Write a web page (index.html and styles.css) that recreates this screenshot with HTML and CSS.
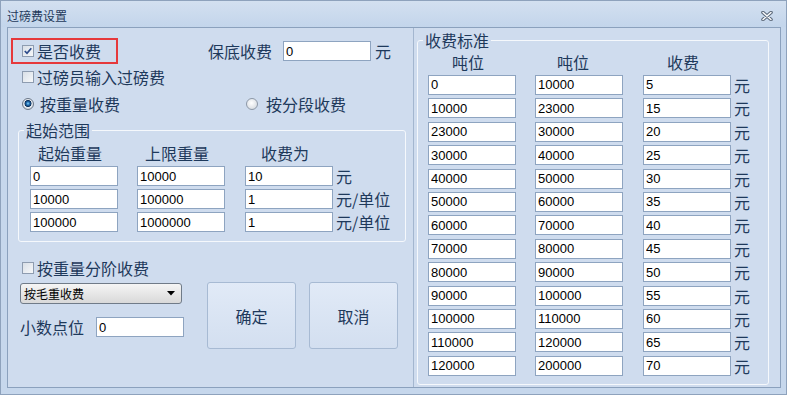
FILE: index.html
```html
<!DOCTYPE html>
<html lang="zh-CN">
<head>
  <meta charset="UTF-8">
  <title>过磅费设置</title>
  <link rel="stylesheet" href="styles.css">
</head>
<body>
  <div class="window">
    <div class="titlebar">
      <span class="title">过磅费设置</span>
      <svg class="close" width="12" height="10" viewBox="0 0 12 10">
        <path d="M2 1.5 L10 8.5 M10 1.5 L2 8.5" stroke="#5d6b7d" stroke-width="3.6" stroke-linecap="round"/>
        <path d="M2 1.5 L10 8.5 M10 1.5 L2 8.5" stroke="#ffffff" stroke-width="1.4" stroke-linecap="round"/>
      </svg>
    </div>
    <div class="body">
      <div class="left">
        <div class="row first-row">
          <div class="highlight">
            <span class="check on"><svg width="10" height="10" viewBox="0 0 10 10"><path d="M1.8 5 L4 7.3 L8.3 2.2" fill="none" stroke="#2b4a8b" stroke-width="1.7"/></svg></span>
            <span>是否收费</span>
          </div>
          <span class="min-label">保底收费</span>
          <input class="field min-field" type="text" value="0">
          <span class="unit">元</span>
        </div>
        <div class="row check-row">
          <span class="check"></span>
          <span>过磅员输入过磅费</span>
        </div>
        <div class="row radio-row">
          <span class="radio on"></span>
          <span class="radio-text">按重量收费</span>
          <span class="radio second"></span>
          <span class="radio-text">按分段收费</span>
        </div>

        <fieldset class="group range">
          <legend>起始范围</legend>
          <div class="grid">
            <span class="head" style="padding-left:8px">起始重量</span>
            <span class="head" style="padding-left:8px">上限重量</span>
            <span class="head" style="padding-left:16px">收费为</span>
            <span></span>
            <input class="field" type="text" value="0">
            <input class="field" type="text" value="10000">
            <input class="field" type="text" value="10">
            <span class="unit">元</span>
            <input class="field" type="text" value="10000">
            <input class="field" type="text" value="100000">
            <input class="field" type="text" value="1">
            <span class="unit">元/单位</span>
            <input class="field" type="text" value="100000">
            <input class="field" type="text" value="1000000">
            <input class="field" type="text" value="1">
            <span class="unit">元/单位</span>
          </div>
        </fieldset>

        <div class="row check-row step-row">
          <span class="check"></span>
          <span>按重量分阶收费</span>
        </div>
        <div class="bottom">
          <div class="options">
            <div class="select">
              <span>按毛重收费</span>
              <svg width="8" height="5" viewBox="0 0 8 5"><path d="M0 0 H8 L4 4.5 Z" fill="#000"/></svg>
            </div>
            <div class="row decimal-row">
              <span>小数点位</span>
              <input class="field" type="text" value="0">
            </div>
          </div>
          <button class="btn">确定</button>
          <button class="btn">取消</button>
        </div>
      </div>

      <div class="right">
        <fieldset class="group standard">
          <legend>收费标准</legend>
          <div class="grid table">
            <span class="head" style="padding-left:24px">吨位</span>
            <span class="head" style="padding-left:22px">吨位</span>
            <span class="head" style="padding-left:24px">收费</span>
            <span></span>
            <input class="field" type="text" value="0"><input class="field" type="text" value="10000"><input class="field" type="text" value="5"><span class="unit">元</span>
            <input class="field" type="text" value="10000"><input class="field" type="text" value="23000"><input class="field" type="text" value="15"><span class="unit">元</span>
            <input class="field" type="text" value="23000"><input class="field" type="text" value="30000"><input class="field" type="text" value="20"><span class="unit">元</span>
            <input class="field" type="text" value="30000"><input class="field" type="text" value="40000"><input class="field" type="text" value="25"><span class="unit">元</span>
            <input class="field" type="text" value="40000"><input class="field" type="text" value="50000"><input class="field" type="text" value="30"><span class="unit">元</span>
            <input class="field" type="text" value="50000"><input class="field" type="text" value="60000"><input class="field" type="text" value="35"><span class="unit">元</span>
            <input class="field" type="text" value="60000"><input class="field" type="text" value="70000"><input class="field" type="text" value="40"><span class="unit">元</span>
            <input class="field" type="text" value="70000"><input class="field" type="text" value="80000"><input class="field" type="text" value="45"><span class="unit">元</span>
            <input class="field" type="text" value="80000"><input class="field" type="text" value="90000"><input class="field" type="text" value="50"><span class="unit">元</span>
            <input class="field" type="text" value="90000"><input class="field" type="text" value="100000"><input class="field" type="text" value="55"><span class="unit">元</span>
            <input class="field" type="text" value="100000"><input class="field" type="text" value="110000"><input class="field" type="text" value="60"><span class="unit">元</span>
            <input class="field" type="text" value="110000"><input class="field" type="text" value="120000"><input class="field" type="text" value="65"><span class="unit">元</span>
            <input class="field" type="text" value="120000"><input class="field" type="text" value="200000"><input class="field" type="text" value="70"><span class="unit">元</span>
          </div>
        </fieldset>
      </div>
    </div>
  </div>
</body>
</html>
```

FILE: styles.css
```css
* {
  box-sizing: border-box;
}
body {
  margin: 0;
  font-family: "Noto Sans CJK SC", sans-serif;
  color: #1e395b;
}
.window {
  width: 787px;
  height: 395px;
  border: 1px solid #8ea2bc;
  background: #c6d7ec;
  display: flex;
  flex-direction: column;
}
.titlebar {
  height: 26px;
  flex: none;
  display: flex;
  align-items: center;
  padding: 4px 13px 0 6px;
  background: linear-gradient(#d3e0f0, #c3d5eb);
  font-size: 12px;
  line-height: 16px;
}
.close {
  margin-left: auto;
}
.body {
  flex: 1;
  margin: 0 5px 6px 6px;
  border: 1px solid #8ba1bd;
  background: #cfdcee;
  display: flex;
}
.left {
  width: 406px;
  flex: none;
  border-right: 1px solid #a3b6cf;
  padding-top: 10px;
}
.right {
  flex: 1;
  padding: 2px 11px 2px 3px;
}
.row {
  display: flex;
  align-items: center;
  font-size: 16px;
  line-height: 20px;
}
.first-row {
  height: 26px;
}
.highlight {
  width: 107px;
  height: 26px;
  margin-left: 3px;
  border: 2px solid #e6393c;
  display: flex;
  align-items: center;
  gap: 3px;
  padding-left: 9px;
}
.min-label {
  margin-left: 90px;
}
.first-row .unit {
  margin-left: 4px;
}
.check-row {
  height: 26px;
  padding-left: 14px;
  gap: 3px;
}
.radio-row {
  height: 28px;
  padding-left: 14px;
}
.check {
  width: 12px;
  height: 12px;
  flex: none;
  border: 1px solid #8e9cb0;
  background: linear-gradient(135deg, #d9dfe7, #f6f8fa);
  display: flex;
  align-items: center;
  justify-content: center;
}
.radio {
  width: 12px;
  height: 12px;
  flex: none;
  border-radius: 50%;
  border: 1px solid #8d98a7;
  background: radial-gradient(circle at 45% 40%, #ffffff, #cdd3da);
}
.radio.on {
  border-color: #6c7888;
  background: radial-gradient(circle at 50% 45%, #8ed6f7 0, #2475bb 1.5px, #0d2f58 3.2px, #e8edf3 3.8px, #c9d0d9 6px);
}
.radio-text {
  margin-left: 6px;
}
.radio.second {
  margin-left: 126px;
}
.radio.second + .radio-text {
  margin-left: 8px;
}
.group {
  margin: 0;
  padding: 0;
  border: 1px solid #f5f8fc;
  border-radius: 3px;
  min-width: 0;
}
.group legend {
  margin-left: 5px;
  padding: 0 2px;
  font-size: 16px;
  line-height: 20px;
}
.range {
  margin: 2px 0 0 10px;
  width: 388px;
  padding-bottom: 9px;
}
.grid {
  display: grid;
  grid-template-columns: 107px 108px 91px auto;
  grid-template-rows: 23px;
  grid-auto-rows: 20px;
  row-gap: 3px;
  align-items: center;
  margin-left: 11px;
  font-size: 16px;
  line-height: 20px;
}
.grid .head {
  align-self: start;
  line-height: 26px;
}
.field {
  width: 88px;
  height: 20px;
  margin: 0;
  padding: 0 2px;
  border: 1px solid #8ea4c0;
  border-radius: 0;
  background: #fff;
  font-family: "Liberation Sans", Arial, sans-serif;
  font-size: 13px;
  color: #000;
  outline: none;
}
.first-row .min-field {
  margin-left: 11px;
}
.standard {
  height: 100%;
}
.table {
  margin-left: 10px;
  grid-template-rows: 21.6px;
  row-gap: 3.4px;
}
.table .head {
  line-height: 25px;
}
.step-row {
  margin-top: 13px;
}
.bottom {
  display: flex;
  align-items: flex-start;
  margin-top: 1px;
}
.options {
  width: 164px;
  margin-left: 12px;
}
.select {
  width: 162px;
  height: 21px;
  margin-top: 1px;
  border: 1px solid #707b88;
  border-radius: 3px;
  background: linear-gradient(#f5f5f5, #d9d9d9);
  display: flex;
  align-items: center;
  justify-content: space-between;
  padding: 0 6px 0 3px;
  font-size: 12px;
  color: #000;
}
.decimal-row {
  height: 20px;
  margin-top: 13px;
  gap: 12px;
}
.btn {
  width: 89px;
  height: 67px;
  margin-left: 23px;
  border: 1px solid #a7bad3;
  border-radius: 3px;
  background: linear-gradient(#e1eaf7, #d3dff0);
  font-family: "Noto Sans CJK SC", sans-serif;
  font-size: 16px;
  color: #1e395b;
  padding: 0;
}
.btn + .btn {
  margin-left: 13px;
}
```
